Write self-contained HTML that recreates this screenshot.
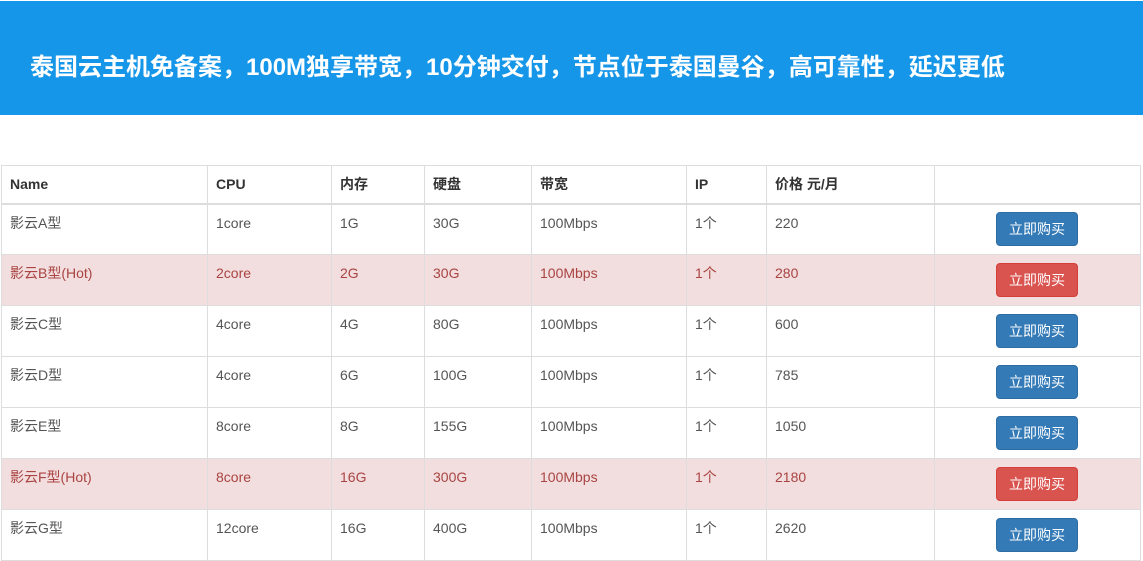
<!DOCTYPE html>
<html><head><meta charset="utf-8"><style>
*{box-sizing:border-box}
body{margin:0;width:1143px;height:561px;overflow:hidden;background:#fff;font-family:"Liberation Sans","Noto Sans CJK SC",sans-serif;font-size:14px;color:#333;line-height:1.42857}
.hd{position:absolute;left:0;top:1px;width:1143px;height:114px;background:#1596e8;color:#fff;font-weight:bold;font-size:24px;padding-left:30px;line-height:134px;white-space:nowrap}
table{position:absolute;left:1px;top:165px;width:1140px;border-collapse:collapse}
td,th{border:1px solid #ddd;padding:9px 8px 7px;text-align:left;vertical-align:top}
th{border-bottom:2px solid #ddd;height:38px}
td{height:51px;color:#555}
tr.d td{background:#f2dede;color:#a94442}
.b{display:block;margin:0 0 0 53px;width:82px;height:34px;border-radius:4px;color:#fff;font-size:14px;line-height:32px;text-align:center;background:#337ab7;border:1px solid #2e6da4}
tr.d .b{background:#d9534f;border-color:#d43f3a}
td:last-child{vertical-align:middle;padding:0 8px}
</style></head><body>
<div class="hd">泰国云主机免备案，100M独享带宽，10分钟交付，节点位于泰国曼谷，高可靠性，延迟更低</div>
<table>
<tr><th style="width:206px">Name</th><th style="width:124px">CPU</th><th style="width:93px">内存</th><th style="width:107px">硬盘</th><th style="width:155px">带宽</th><th style="width:80px">IP</th><th style="width:168px">价格 元/月</th><th></th></tr>
<tr><td>影云A型</td><td>1core</td><td>1G</td><td>30G</td><td>100Mbps</td><td>1个</td><td>220</td><td><span class="b">立即购买</span></td></tr>
<tr class="d"><td>影云B型(Hot)</td><td>2core</td><td>2G</td><td>30G</td><td>100Mbps</td><td>1个</td><td>280</td><td><span class="b">立即购买</span></td></tr>
<tr><td>影云C型</td><td>4core</td><td>4G</td><td>80G</td><td>100Mbps</td><td>1个</td><td>600</td><td><span class="b">立即购买</span></td></tr>
<tr><td>影云D型</td><td>4core</td><td>6G</td><td>100G</td><td>100Mbps</td><td>1个</td><td>785</td><td><span class="b">立即购买</span></td></tr>
<tr><td>影云E型</td><td>8core</td><td>8G</td><td>155G</td><td>100Mbps</td><td>1个</td><td>1050</td><td><span class="b">立即购买</span></td></tr>
<tr class="d"><td>影云F型(Hot)</td><td>8core</td><td>16G</td><td>300G</td><td>100Mbps</td><td>1个</td><td>2180</td><td><span class="b">立即购买</span></td></tr>
<tr><td>影云G型</td><td>12core</td><td>16G</td><td>400G</td><td>100Mbps</td><td>1个</td><td>2620</td><td><span class="b">立即购买</span></td></tr>
</table>
</body></html>
